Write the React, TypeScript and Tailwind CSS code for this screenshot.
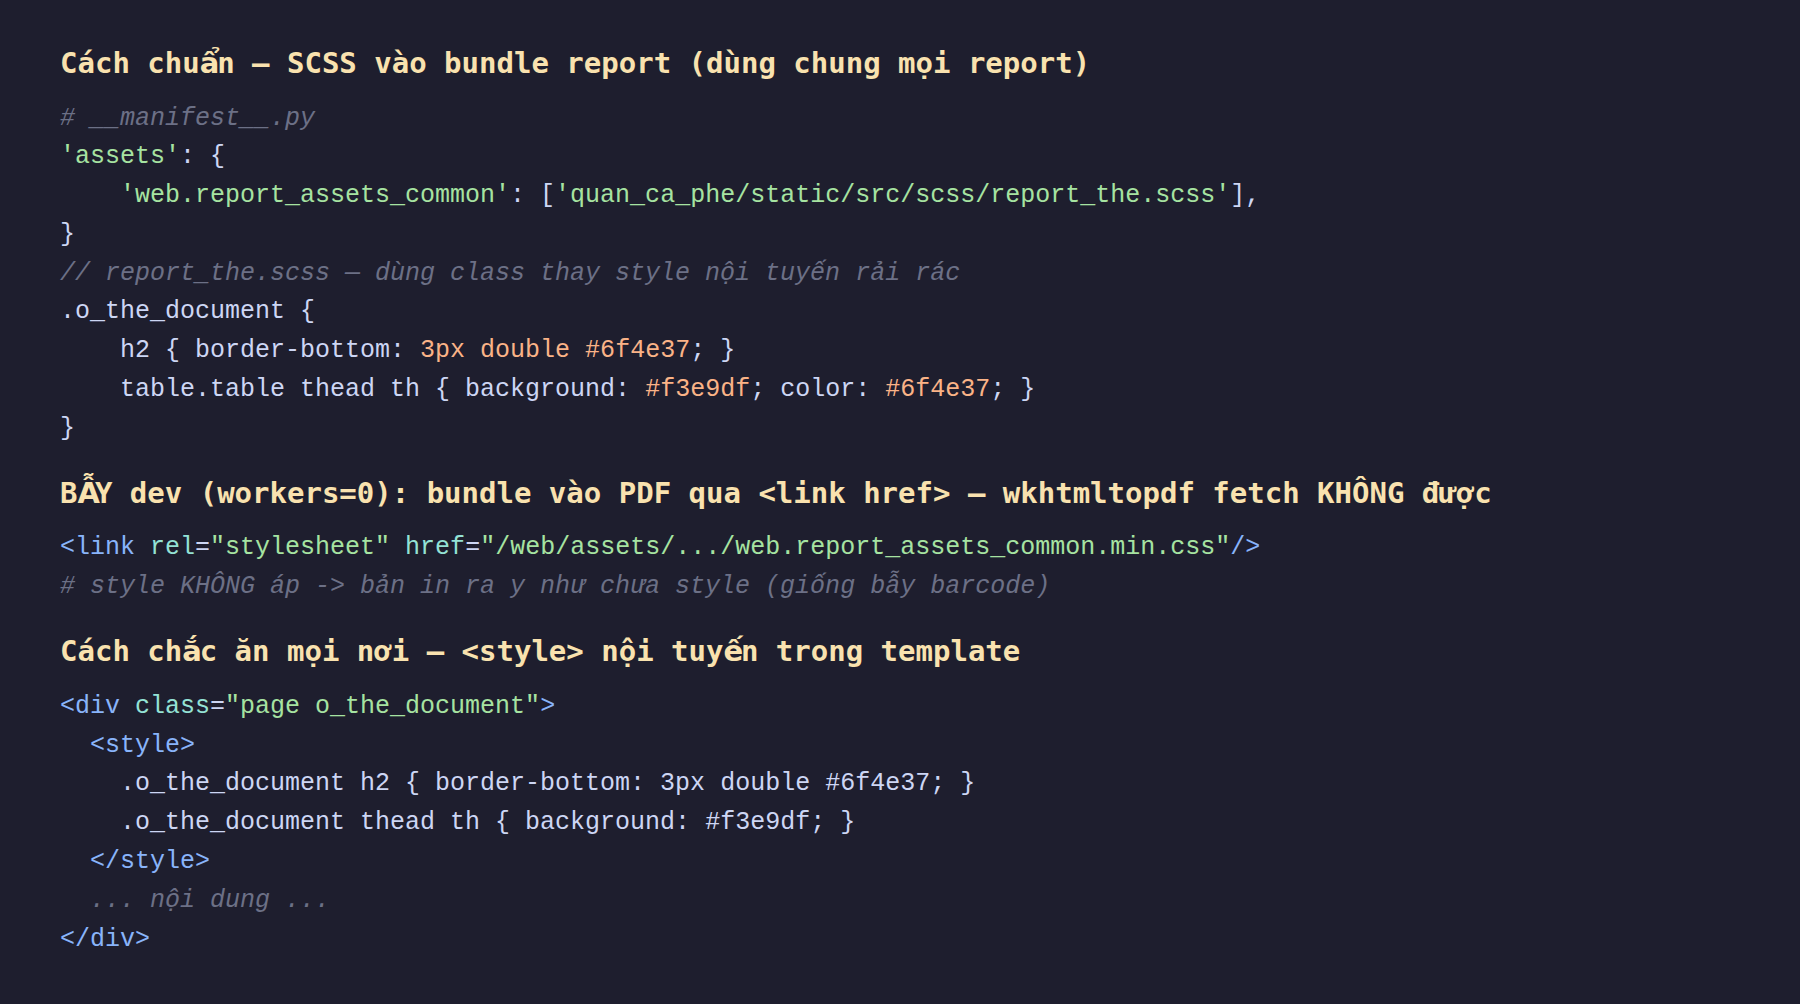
import React from "react";

const T = ({ c, children }: { c: string; children: React.ReactNode }) => <span className={c}>{children}</span>;

const V = ({ children }: { children: React.ReactNode }) => (
  <span className="inline-block w-[17.46px] text-center font-['DejaVu_Sans',sans-serif]">{children}</span>
);

const txt = "text-[#cdd6f4]";
const grn = "text-[#a6e3a1]";
const cmt = "text-[#6c7086] italic";
const blu = "text-[#89b4fa]";
const tea = "text-[#94e2d5]";
const org = "text-[#fab387]";

function H({ children, mt }: { children: React.ReactNode; mt: string }) {
  return (
    <h2
      className={`${mt} text-[29px] leading-[38px] font-bold text-[#f9e2af] whitespace-pre font-['DejaVu_Sans_Mono',monospace]`}
    >
      {children}
    </h2>
  );
}

function Code({ children }: { children: React.ReactNode }) {
  return (
    <pre className="mt-[17.5px] text-[25px] leading-[38.8px] text-[#cdd6f4] whitespace-pre font-['Liberation_Mono',monospace]">
      {children}
    </pre>
  );
}

export default function App() {
  return (
    <div className="min-h-[1004px] w-full bg-[#1e1e2e] pl-[60px] pt-[44px] flex flex-col">
      <H mt="mt-0">Cách chu<V>ẩ</V>n — SCSS vào bundle report (dùng chung mọi report)</H>
      <Code>
        <div><T c={cmt}># __manifest__.py</T></div>
        <div><T c={grn}>'assets'</T><T c={txt}>: {"{"}</T></div>
        <div>{"    "}<T c={grn}>'web.report_assets_common'</T><T c={txt}>: [</T><T c={grn}>'quan_ca_phe/static/src/scss/report_the.scss'</T><T c={txt}>],</T></div>
        <div><T c={txt}>{"}"}</T></div>
        <div><T c={cmt}>// report_the.scss — dùng class thay style nội tuyến rải rác</T></div>
        <div><T c={txt}>.o_the_document {"{"}</T></div>
        <div>{"    "}<T c={txt}>h2 {"{"} border-bottom: </T><T c={org}>3px double #6f4e37</T><T c={txt}>; {"}"}</T></div>
        <div>{"    "}<T c={txt}>table.table thead th {"{"} background: </T><T c={org}>#f3e9df</T><T c={txt}>; color: </T><T c={org}>#6f4e37</T><T c={txt}>; {"}"}</T></div>
        <div><T c={txt}>{"}"}</T></div>
      </Code>
      <H mt="mt-[25px]">B<V>Ẫ</V>Y dev (workers=0): bundle vào PDF qua &lt;link href&gt; — wkhtmltopdf fetch KHÔNG được</H>
      <Code>
        <div><T c={blu}>&lt;link</T> <T c={tea}>rel</T><T c={txt}>=</T><T c={grn}>"stylesheet"</T> <T c={tea}>href</T><T c={txt}>=</T><T c={grn}>"/web/assets/.../web.report_assets_common.min.css"</T><T c={blu}>/&gt;</T></div>
        <div><T c={cmt}># style KHÔNG áp -&gt; bản in ra y như chưa style (giống bẫy barcode)</T></div>
      </Code>
      <H mt="mt-[25.5px]">Cách ch<V>ắ</V>c ăn mọi nơi — &lt;style&gt; nội tuy<V>ế</V>n trong template</H>
      <Code>
        <div><T c={blu}>&lt;div</T> <T c={tea}>class</T><T c={txt}>=</T><T c={grn}>"page o_the_document"</T><T c={blu}>&gt;</T></div>
        <div>{"  "}<T c={blu}>&lt;style&gt;</T></div>
        <div>{"    "}<T c={txt}>.o_the_document h2 {"{"} border-bottom: 3px double #6f4e37; {"}"}</T></div>
        <div>{"    "}<T c={txt}>.o_the_document thead th {"{"} background: #f3e9df; {"}"}</T></div>
        <div>{"  "}<T c={blu}>&lt;/style&gt;</T></div>
        <div>{"  "}<T c={cmt}>... nội dung ...</T></div>
        <div><T c={blu}>&lt;/div&gt;</T></div>
      </Code>
    </div>
  );
}
